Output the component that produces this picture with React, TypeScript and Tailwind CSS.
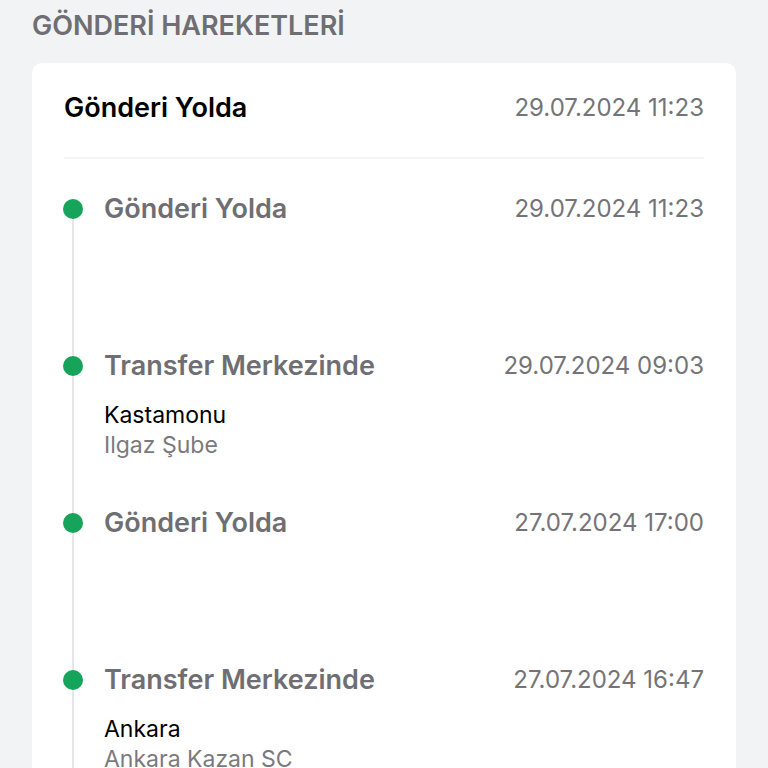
import React from 'react'

type Movement = {
  title: string
  date: string
  city?: string
  branch?: string
}

const movements: Movement[] = [
  { title: 'Gönderi Yolda', date: '29.07.2024 11:23' },
  { title: 'Transfer Merkezinde', date: '29.07.2024 09:03', city: 'Kastamonu', branch: 'Ilgaz Şube' },
  { title: 'Gönderi Yolda', date: '27.07.2024 17:00' },
  { title: 'Transfer Merkezinde', date: '27.07.2024 16:47', city: 'Ankara', branch: 'Ankara Kazan SC' },
  { title: 'Gönderi Yolda', date: '27.07.2024 12:10' },
]

export default function App() {
  return (
    <div
      className="min-h-screen h-[768px] overflow-hidden bg-[#f2f3f5] px-8"
      style={{ fontFamily: 'Inter, "Noto Sans", sans-serif' }}
    >
      {/* section title */}
      <h1 className="pt-[10px] h-[63px] text-[27px] leading-[32px] font-semibold text-[#6e6e73]">
        GÖNDERİ HAREKETLERİ
      </h1>

      {/* card */}
      <div className="bg-white rounded-[10px] px-8 pt-[29px]">
        <div className="flex items-center justify-between h-8">
          <span className="text-[27px] font-semibold text-black">Gönderi Yolda</span>
          <span className="text-[24px] text-[#747478]">29.07.2024 11:23</span>
        </div>
        <div className="mt-[33px] h-[2px] bg-[#f4f4f5]" />

        {/* timeline */}
        <div className="relative mt-[34px]">
          <div className="absolute left-[8px] top-[16px] bottom-0 w-[2px] bg-[#e6e6e9]" />
          {movements.map((m, i) => (
            <div key={i} className="relative h-[157px] pl-10">
              <div className="absolute left-[-1px] top-[6px] w-5 h-5 rounded-full bg-[#16a35a]" />
              <div className="flex items-center justify-between h-8">
                <span className="text-[27px] font-semibold text-[#6e6e73]">{m.title}</span>
                <span className="text-[24px] text-[#747478]">{m.date}</span>
              </div>
              <div className="mt-[18px] text-[23px] leading-[30px]">
                <div className="text-black h-[30px]">{m.city}</div>
                <div className="text-[#7a7a7e] h-[30px]">{m.branch}</div>
              </div>
            </div>
          ))}
        </div>
      </div>
    </div>
  )
}
